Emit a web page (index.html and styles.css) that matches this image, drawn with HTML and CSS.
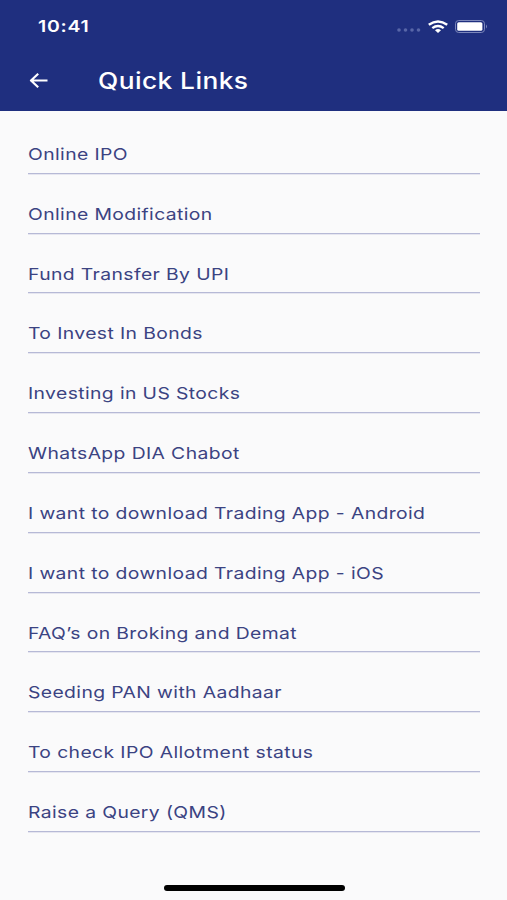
FILE: index.html
```html
<!DOCTYPE html>
<html lang="en">
<head>
<meta charset="utf-8">
<title>Quick Links</title>
<link rel="stylesheet" href="styles.css">
</head>
<body>
<header class="header">
  <div class="status">
    <span class="time">10:41</span>
    <svg class="dots" width="24" height="4" viewBox="0 0 24 4"><g fill="#5866a8"><circle cx="2" cy="2" r="1.8"/><circle cx="8.5" cy="2" r="1.8"/><circle cx="15" cy="2" r="1.8"/><circle cx="21.5" cy="2" r="1.8"/></g></svg>
    <svg class="wifi" width="20" height="13" viewBox="0 0 20 13"><g fill="none" stroke="#fff" stroke-width="2.4"><path d="M.8 4.8Q10-2 19.2 4.8"/><path d="M4.3 8.1Q10 3.8 15.7 8.1"/></g><path d="M7 10.2Q10 8 13 10.2L10 13Z" fill="#fff"/></svg>
    <svg class="battery" width="33" height="13" viewBox="0 0 33 13"><rect x=".5" y=".5" width="29" height="12" rx="3.2" fill="none" stroke="#7c87bb"/><rect x="2.2" y="2.2" width="25.2" height="8.6" rx="1.6" fill="#fff"/><path d="M31 4.5Q33 6.5 31 8.5Z" fill="#7c87bb"/></svg>
  </div>
  <div class="bar">
    <svg class="back" width="20" height="16" viewBox="0 0 20 16"><path d="M18.5 8.5H2M9.2 1.8L2 8.5L9.2 15.2" fill="none" stroke="#fff" stroke-width="2.2" stroke-linejoin="round"/></svg>
    <h1 class="title">Quick Links</h1>
  </div>
</header>
<main class="links">
  <a class="link"><span>Online IPO</span></a>
  <a class="link"><span>Online Modification</span></a>
  <a class="link"><span>Fund Transfer By UPI</span></a>
  <a class="link"><span>To Invest In Bonds</span></a>
  <a class="link"><span>Investing in US Stocks</span></a>
  <a class="link"><span>WhatsApp DIA Chabot</span></a>
  <a class="link"><span>I want to download Trading App - Android</span></a>
  <a class="link"><span>I want to download Trading App - iOS</span></a>
  <a class="link"><span>FAQ’s on Broking and Demat</span></a>
  <a class="link"><span>Seeding PAN with Aadhaar</span></a>
  <a class="link"><span>To check IPO Allotment status</span></a>
  <a class="link"><span>Raise a Query (QMS)</span></a>
</main>
<div class="home"></div>
</body>
</html>
```
FILE: styles.css
```css
* { box-sizing: border-box; }
body { margin: 0; height: 900px; overflow: hidden; background: #fafafb; font-family: Inter, sans-serif; display: flex; flex-direction: column; }
.header { height: 111px; background: #1f2f7f; color: #fff; flex: none; }
.status { height: 52px; display: flex; align-items: center; padding: 0 19px 0 38px; }
.time { font-size: 16.5px; font-weight: 600; letter-spacing: .6px; margin-right: auto; transform: scaleX(1.18); transform-origin: left; }
.dots { margin: 8px 7px 0 0; }
.wifi { margin-right: 7px; }
.bar { height: 56px; display: flex; align-items: center; padding-left: 29px; }
.title { margin: 0 0 0 49px; font-size: 22.5px; font-weight: 500; letter-spacing: .35px; transform: translateY(-.5px) scaleX(1.17); transform-origin: left; }
.links { padding: 3px 27px 0 28px; flex: 1; }
.link { display: flex; height: 59.82px; padding-top: 29px; border-bottom: 1px solid #b6b9d6; box-shadow: 0 1px #e6e6f0; color: #3b4382; font-size: 16.5px; line-height: 22px; letter-spacing: .33px; white-space: nowrap; }
.link span { transform: translateY(.45px) scaleX(1.172); transform-origin: left; }
.home { width: 181px; height: 6px; border-radius: 3px; background: #000; margin: 0 auto 9px 164px; flex: none; }
```
